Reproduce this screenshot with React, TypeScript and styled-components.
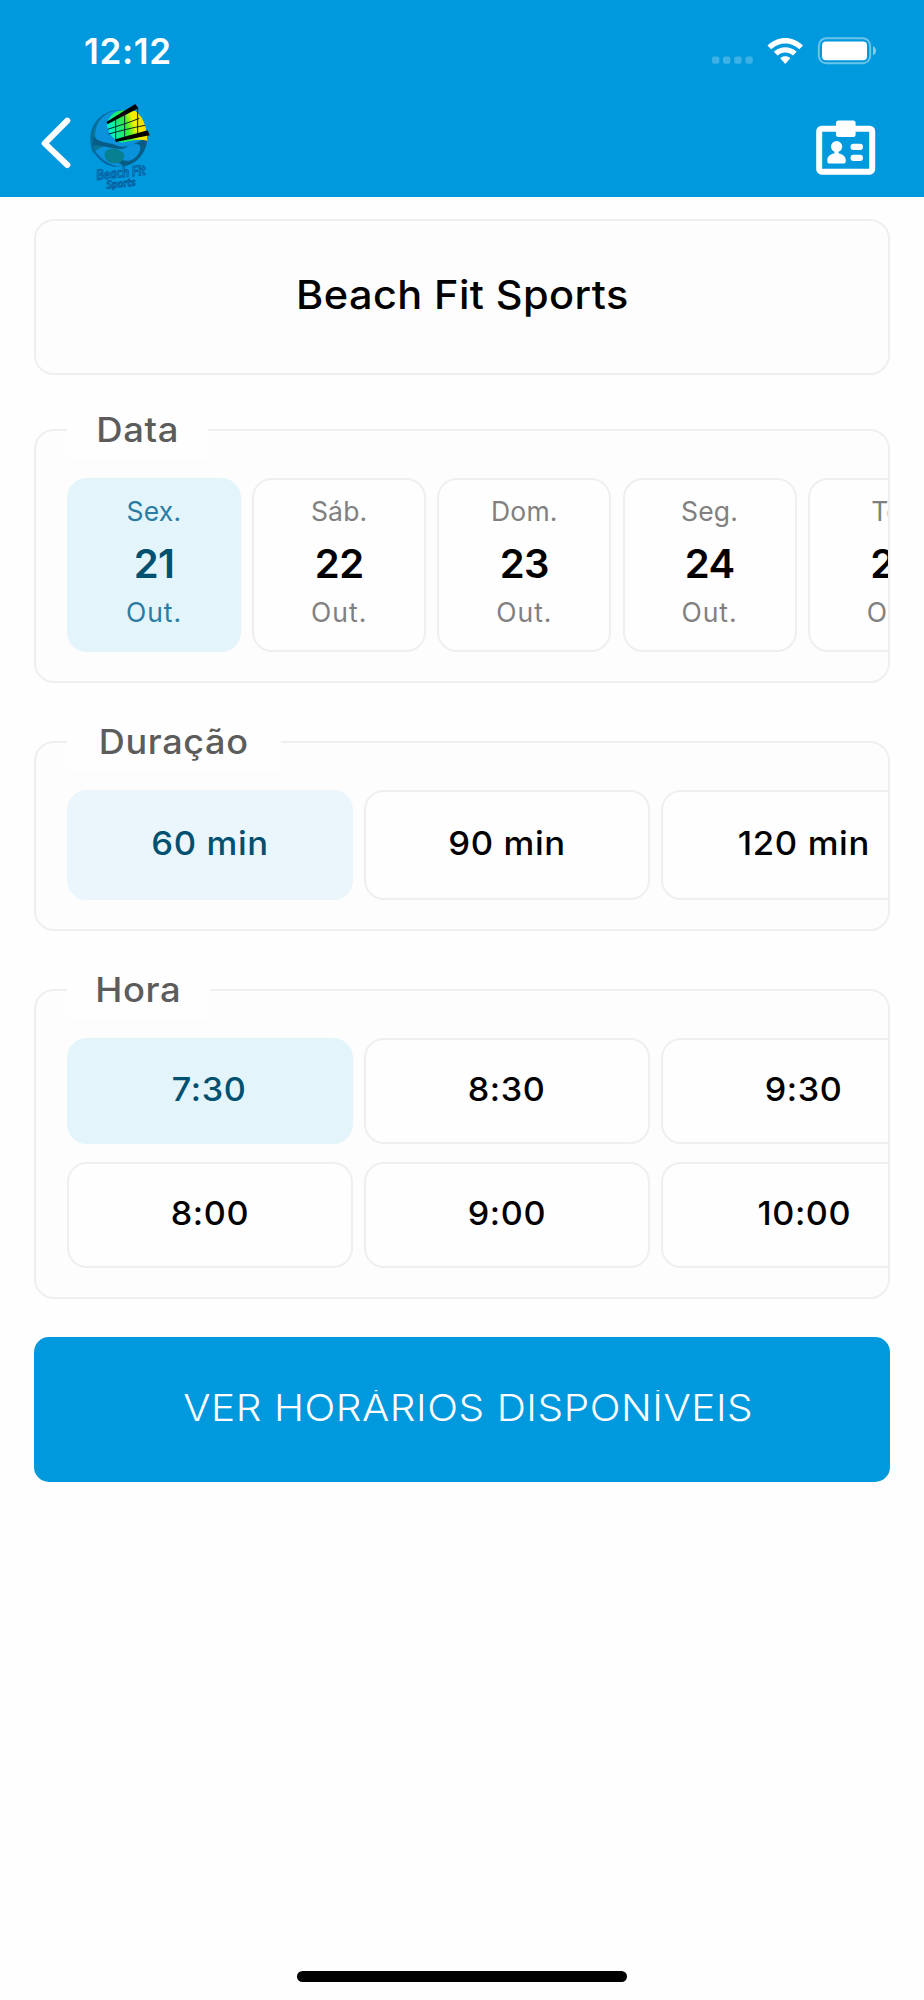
import React from "react";
import styled, { createGlobalStyle } from "styled-components";

const GlobalStyle = createGlobalStyle`
  *, *::before, *::after { box-sizing: border-box; }
  body {
    margin: 0;
    background: #fefefe;
    font-family: Inter, "Liberation Sans", sans-serif;
    color: #000;
  }
`;

const Screen = styled.div`
  width: 924px;
  height: 2000px;
  display: flex;
  flex-direction: column;
  overflow: hidden;
  background: #fefefe;
`;

const Header = styled.header`
  flex: none;
  height: 197px;
  background: #0099dd;
  color: #fff;
  display: flex;
  flex-direction: column;
`;

const StatusBar = styled.div`
  height: 95px;
  padding: 6px 47px 0 84px;
  display: flex;
  align-items: center;
  justify-content: space-between;
`;

const Clock = styled.span`
  font-size: 35px;
  font-weight: 560;
  line-height: 40px;
  letter-spacing: 0.7px;
`;

const StatusIcons = styled.div`
  display: flex;
  align-items: center;
`;

const NavBar = styled.div`
  flex: 1;
  display: flex;
  align-items: flex-start;
  padding: 0 46px 0 40px;
`;

const BackIcon = styled.svg`
  margin-top: 20px;
`;

const Logo = styled.svg`
  margin-left: 6px;
`;

const BadgeIcon = styled.svg`
  margin: 22px 0 0 auto;
`;

const Main = styled.main`
  flex: 1;
  display: flex;
  flex-direction: column;
  padding: 22px 34px 0;
`;

const Panel = styled.section`
  flex: none;
  border: 2px solid #efefef;
  border-radius: 20px;
  background: #fdfdfd;
`;

const VenuePanel = styled(Panel)`
  height: 156px;
  display: flex;
  align-items: center;
  justify-content: center;
  padding-bottom: 4px;
  margin-bottom: 54px;
`;

/* Widens the letterforms for the geometric look of the headings and options. */
const Wide = styled.span<{ $by: number }>`
  display: inline-block;
  transform: scaleX(${(p) => p.$by});
`;

const VenueName = styled.h1`
  margin: 0;
  font-size: 39.5px;
  line-height: 48px;
  font-weight: 500;
  letter-spacing: 0.4px;
`;

const Group = styled(Panel)<{ $after: number }>`
  padding: 0 0 29px 31px;
  margin-bottom: ${(p) => p.$after}px;
`;

const Legend = styled.h2<{ $width: number }>`
  width: ${(p) => p.$width}px;
  height: 60px;
  margin: -31px 0 18px;
  background: #fefefe;
  color: #5c5c5c;
  font-size: 34px;
  line-height: 59px;
  font-weight: 500;
  letter-spacing: 0.6px;
  text-align: center;
`;

const Scroller = styled.div`
  overflow: hidden;
  display: flex;
  flex-direction: column;
  gap: 18px;
`;

const Row = styled.div`
  display: flex;
  gap: 11.2px;
`;

const Tile = styled.button<{ $selected?: boolean; $tint?: string }>`
  flex: none;
  margin: 0;
  border: 2px solid ${(p) => (p.$selected ? p.$tint : "#efefef")};
  border-radius: 20px;
  background: ${(p) => (p.$selected ? p.$tint : "#fefefe")};
  color: ${(p) => (p.$selected ? "#00506f" : "#000")};
  font-family: inherit;
`;

const DayTile = styled(Tile)`
  width: 174px;
  height: 174px;
  padding: 10.5px 0 0;
  display: flex;
  flex-direction: column;
  align-items: center;
  justify-content: flex-start;
`;

const DayLabel = styled.span<{ $selected?: boolean; $line: number; $spacing: number }>`
  font-size: 26.5px;
  font-weight: 400;
  line-height: ${(p) => p.$line}px;
  letter-spacing: ${(p) => p.$spacing}px;
  color: ${(p) => (p.$selected ? "#2a7da2" : "#808080")};
`;

const DayNumber = styled.span`
  font-size: 40px;
  font-weight: 600;
  line-height: 65px;
  letter-spacing: -0.6px;
`;

const OptionTile = styled(Tile)<{ $height: number }>`
  width: 286px;
  height: ${(p) => p.$height}px;
  padding: 0 1px 4px 0;
  font-size: 33px;
  font-weight: 500;
  letter-spacing: 0.6px;
`;

const SubmitButton = styled.button`
  flex: none;
  height: 145px;
  border: 0;
  border-radius: 15px;
  background: #0099dd;
  color: #fff;
  font-family: inherit;
  display: flex;
  align-items: center;
  justify-content: center;
  padding: 0 0 3px 12px;
`;

/* The label's box is tight, so the accents above the capitals are cut short. */
const SubmitLabel = styled.span`
  overflow: hidden;
  white-space: nowrap;
  height: 36px;
  font-size: 37px;
  line-height: 36px;
  font-weight: 300;
  letter-spacing: 0.5px;
  transform: scaleX(1.095);
`;

const HomeIndicator = styled.div`
  flex: none;
  align-self: center;
  width: 330px;
  height: 11px;
  margin-bottom: 18px;
  border-radius: 6px;
  background: #000;
`;

const days = [
  { week: "Sex.", day: "21", month: "Out." },
  { week: "Sáb.", day: "22", month: "Out." },
  { week: "Dom.", day: "23", month: "Out." },
  { week: "Seg.", day: "24", month: "Out." },
  { week: "Ter.", day: "25", month: "Out." },
];
const durations = ["60 min", "90 min", "120 min"];
const hours = [
  ["7:30", "8:30", "9:30"],
  ["8:00", "9:00", "10:00"],
];

function StatusGlyphs() {
  return (
    <StatusIcons>
      <svg width="165" height="28" viewBox="0 0 165 28" fill="#fff">
        <g opacity="0.24">
          <rect x="0" y="19.5" width="7.4" height="7.2" rx="2" />
          <rect x="11" y="19.5" width="7.4" height="7.2" rx="2" />
          <rect x="22.2" y="19.5" width="7.4" height="7.2" rx="2" />
          <rect x="33.4" y="19.5" width="7.4" height="7.2" rx="2" />
        </g>
        <path d="M55.5 8.5C66 -1.5 80.500 -1.5 91 8.500L87.300 12.300C79 4.600 67.500 4.600 59.200 12.300Z" />
        <path d="M61.800 14.800C68.300 8.600 78.200 8.600 84.700 14.800L81 18.600C76.500 14.500 70 14.500 65.500 18.600Z" />
        <path d="M68.200 21.300C71 18.700 75.500 18.700 78.300 21.300L73.250 27Z" />
        <rect x="106.800" y="1.300" width="51.400" height="25" rx="7.500" fill="none" stroke="#fff" strokeWidth="1.900" opacity="0.42" />
        <rect x="110" y="4.500" width="45" height="18.700" rx="4" />
        <path d="M161 9.300C165 10.800 165 16.800 161 18.300Z" opacity="0.5" />
      </svg>
    </StatusIcons>
  );
}

function BeachLogo() {
  return (
    <Logo width="80" height="100" viewBox="0 0 240 300">
      <defs>
        <linearGradient id="sun" x1="0" y1="0.600" x2="1" y2="0.350">
          <stop offset="0" stopColor="#00efe0" />
          <stop offset="0.300" stopColor="#12ee78" />
          <stop offset="0.480" stopColor="#35ee3a" />
          <stop offset="0.680" stopColor="#f4f000" />
          <stop offset="1" stopColor="#ffd200" />
        </linearGradient>
      </defs>
      <circle cx="116" cy="130" r="84" fill="#0a92dc" stroke="#0870b4" strokeWidth="2" />
      <path d="M34 108C45 75 70 53 100 47C62 62 43 90 46 126C52 142 79 146 108 152C75 151 51 158 39 176C31 158 29 130 34 108Z" fill="#087796" />
      <path d="M100 47C55 61 31 92 34 135C35 182 72 216 116 216C92 210 58 192 43 164C36 148 32 118 46 91C59 66 79 53 100 47Z" fill="#0762a0" />
      <path d="M40 123C53 145 80 139 108 151C132 162 157 150 184 136C196 130 201 132 201 139C196 177 170 207 132 214C121 208 109 199 110 190C116 184 124 187 130 196C156 204 180 180 181 158C183 143 155 143 137 158C110 171 74 147 39 151Z" fill="#075d86" />
      <path d="M74 177C75 159 111 155 130 173C139 183 127 205 105 205C88 206 73 196 74 177Z" fill="#078092" />
      <path d="M81 85C88 61 109 44 132 47L166 48C186 62 201 90 202 137C176 130 150 139 133 142C119 144 107 139 104 132C91 122 81 104 81 85Z" fill="url(#sun)" />
      <path d="M83 103C112 93 145 84 178 70M86 117C119 108 157 98 195 91M107 73V136M134 60V132M173 40V118" fill="none" stroke="#06272b" strokeWidth="3" />
      <path d="M80 80L166 27L175 40L82 88Z" fill="#000" />
      <path d="M106 133L203 106L209 121L107 141Z" fill="#000" />
      <g transform="rotate(-6 125 240)" textAnchor="middle" fill="#0a8fd4" stroke="#075c9c" strokeWidth="2.6" fontFamily="Lato, sans-serif" fontStyle="italic" fontWeight="700">
        <text x="124" y="247" fontSize="42" textLength="150" lengthAdjust="spacingAndGlyphs">Beach Fit</text>
        <text x="120" y="276" fontSize="33" textLength="88" lengthAdjust="spacingAndGlyphs">Sports</text>
      </g>
    </Logo>
  );
}

export default function App() {
  return (
    <>
      <GlobalStyle />
      <Screen>
        <Header>
          <StatusBar>
            <Clock>12:12</Clock>
            <StatusGlyphs />
          </StatusBar>
          <NavBar>
            <BackIcon width="34" height="56" viewBox="0 0 34 56" fill="none" stroke="#fff" strokeWidth="6" strokeLinecap="round" strokeLinejoin="round">
              <path d="M27.300 5.700L4.700 28.300L27.300 50" />
            </BackIcon>
            <BeachLogo />
            <BadgeIcon width="62" height="60" viewBox="0 0 62 60" fill="#fff">
              <rect x="3.200" y="11.700" width="53" height="43" rx="2.500" fill="none" stroke="#fff" strokeWidth="6" />
              <rect x="20" y="3.600" width="19.600" height="16.400" rx="2.500" />
              <circle cx="20.600" cy="29.600" r="5.600" />
              <path d="M18.500 34H22.500V36.300C27 37.300 29.800 39.500 29.800 43.500C29.800 45.500 29.200 46.500 28 46.500H13C11.800 46.500 11.300 45.500 11.300 43.500C11.300 39.500 14 37.300 18.500 36.300Z" />
              <rect x="34.500" y="26.700" width="12.500" height="6.200" rx="3" />
              <rect x="34.500" y="37.800" width="12.500" height="6.200" rx="3" />
            </BadgeIcon>
          </NavBar>
        </Header>
        <Main>
          <VenuePanel>
            <VenueName>
              <Wide $by={1.05}>Beach Fit Sports</Wide>
            </VenueName>
          </VenuePanel>
          <Group $after={58}>
            <Legend $width={141}>
              <Wide $by={1.07}>Data</Wide>
            </Legend>
            <Scroller>
              <Row>
                {days.map((d, i) => (
                  <DayTile key={d.day} $selected={i === 0} $tint="#e4f4fb">
                    <DayLabel $selected={i === 0} $line={40} $spacing={0.2}>{d.week}</DayLabel>
                    <DayNumber>{d.day}</DayNumber>
                    <DayLabel $selected={i === 0} $line={32} $spacing={1}>{d.month}</DayLabel>
                  </DayTile>
                ))}
              </Row>
            </Scroller>
          </Group>
          <Group $after={58}>
            <Legend $width={214}>
              <Wide $by={1.06}>Duração</Wide>
            </Legend>
            <Scroller>
              <Row>
                {durations.map((d, i) => (
                  <OptionTile key={d} $height={110} $selected={i === 0} $tint="#eaf5fc">
                    <Wide $by={1.05}>{d}</Wide>
                  </OptionTile>
                ))}
              </Row>
            </Scroller>
          </Group>
          <Group $after={38}>
            <Legend $width={143}>
              <Wide $by={1.07}>Hora</Wide>
            </Legend>
            <Scroller>
              {hours.map((row, r) => (
                <Row key={r}>
                  {row.map((h, i) => (
                    <OptionTile key={h} $height={106} $selected={r === 0 && i === 0} $tint="#e4f4fb">
                      <Wide $by={1.035}>{h}</Wide>
                    </OptionTile>
                  ))}
                </Row>
              ))}
            </Scroller>
          </Group>
          <SubmitButton>
            <SubmitLabel>VER HORÁRIOS DISPONÍVEIS</SubmitLabel>
          </SubmitButton>
        </Main>
        <HomeIndicator />
      </Screen>
    </>
  );
}
